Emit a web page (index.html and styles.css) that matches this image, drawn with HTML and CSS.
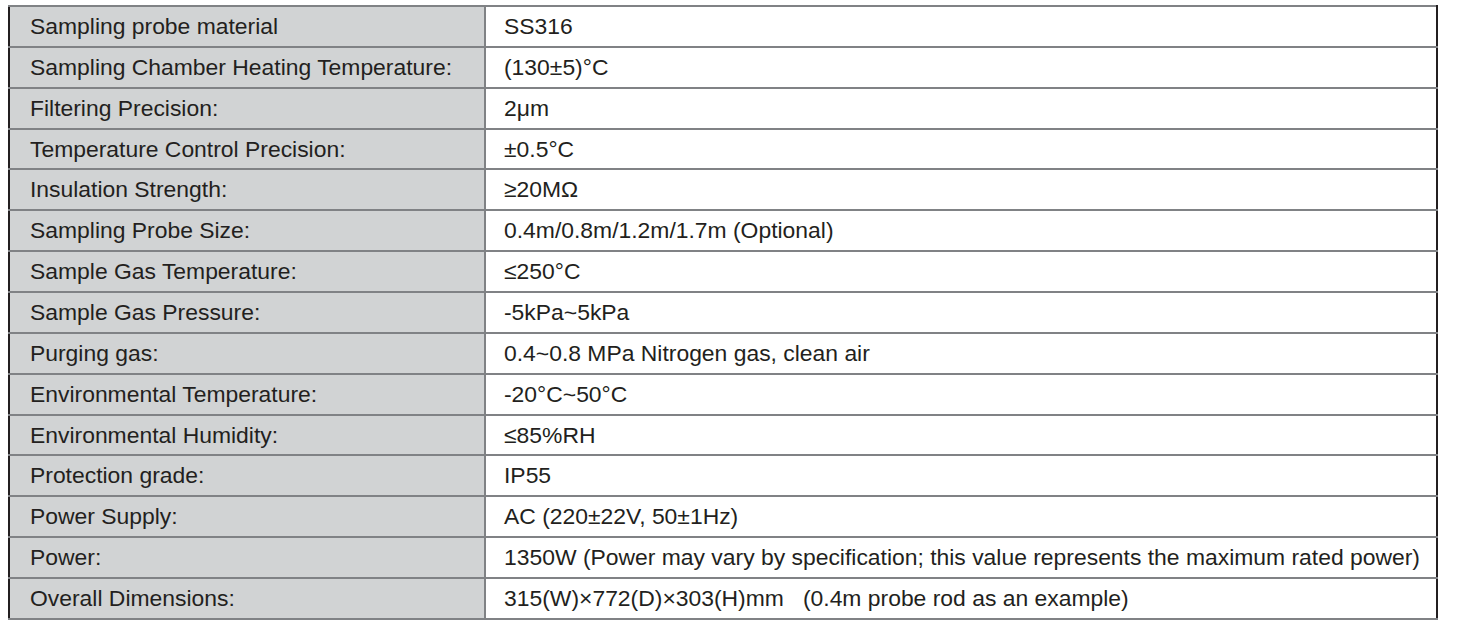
FILE: index.html
```html
<!DOCTYPE html>
<html>
<head>
<meta charset="utf-8">
<link rel="stylesheet" href="styles.css">
</head>
<body>
<table class="spec">
<tbody>
<tr><td class="k">Sampling probe material</td><td class="v">SS316</td></tr>
<tr><td class="k">Sampling Chamber Heating Temperature:</td><td class="v">(130±5)°C</td></tr>
<tr><td class="k">Filtering Precision:</td><td class="v">2μm</td></tr>
<tr><td class="k">Temperature Control Precision:</td><td class="v">±0.5°C</td></tr>
<tr><td class="k">Insulation Strength:</td><td class="v">≥20MΩ</td></tr>
<tr><td class="k">Sampling Probe Size:</td><td class="v">0.4m/0.8m/1.2m/1.7m (Optional)</td></tr>
<tr><td class="k">Sample Gas Temperature:</td><td class="v">≤250°C</td></tr>
<tr><td class="k">Sample Gas Pressure:</td><td class="v">-5kPa~5kPa</td></tr>
<tr><td class="k">Purging gas:</td><td class="v">0.4~0.8 MPa Nitrogen gas, clean air</td></tr>
<tr><td class="k">Environmental Temperature:</td><td class="v">-20°C~50°C</td></tr>
<tr><td class="k">Environmental Humidity:</td><td class="v">≤85%RH</td></tr>
<tr><td class="k">Protection grade:</td><td class="v">IP55</td></tr>
<tr><td class="k">Power Supply:</td><td class="v">AC (220±22V, 50±1Hz)</td></tr>
<tr><td class="k">Power:</td><td class="v">1350W (Power may vary by specification; this value represents the maximum rated power)</td></tr>
<tr><td class="k">Overall Dimensions:</td><td class="v">315(W)×772(D)×303(H)mm&nbsp;&nbsp;&nbsp;(0.4m probe rod as an example)</td></tr>
</tbody>
</table>
</body>
</html>
```

FILE: styles.css
```css
html, body {
  margin: 0;
  padding: 0;
  background: #ffffff;
}
body {
  padding: 5px 0 0 8px;
  font-family: "Liberation Sans", Arial, sans-serif;
  color: #231f20;
}
.spec {
  border-collapse: collapse;
  width: 1430px;
  table-layout: fixed;
}
.spec td {
  height: 40.87px;
  padding: 0 0 1px 0;
  font-size: 22.9px;
  line-height: 26px;
  border-top: 2px solid #808285;
  border-bottom: 2px solid #808285;
  box-sizing: border-box;
  white-space: nowrap;
  vertical-align: middle;
}
.spec td.k {
  width: 476px;
  background: #d1d3d4;
  padding-left: 20px;
  border-left: 2px solid #231f20;
  border-right: 2px solid #808285;
}
.spec td.v {
  background: #ffffff;
  padding-left: 18px;
  border-right: 2px solid #231f20;
}
```
